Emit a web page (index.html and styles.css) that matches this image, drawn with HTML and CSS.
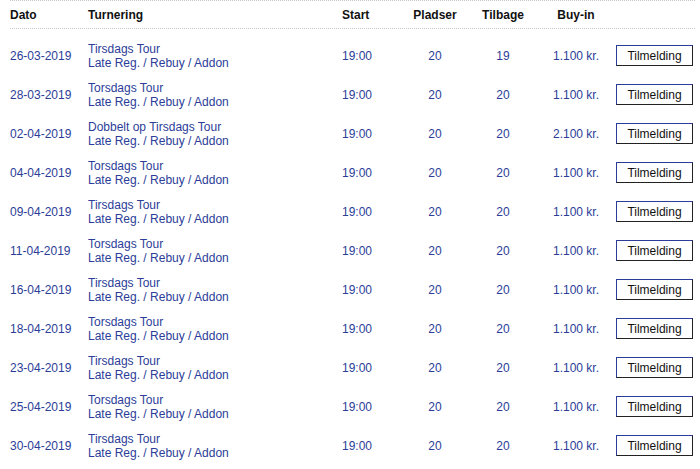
FILE: index.html
```html
<!DOCTYPE html>
<html lang="da">
<head>
<meta charset="utf-8">
<title>Turneringer</title>
<link rel="stylesheet" href="styles.css">
</head>
<body>
<div class="list">
  <div class="row head">
    <div>Dato</div><div>Turnering</div><div>Start</div><div class="c">Pladser</div><div class="c">Tilbage</div><div class="c">Buy-in</div><div></div>
  </div>
  <div class="body">
    <div class="row"><div>26-03-2019</div><div class="t">Tirsdags Tour<br>Late Reg. / Rebuy / Addon</div><div>19:00</div><div class="c">20</div><div class="c">19</div><div class="c">1.100 kr.</div><div><button class="btn">Tilmelding</button></div></div>
    <div class="row"><div>28-03-2019</div><div class="t">Torsdags Tour<br>Late Reg. / Rebuy / Addon</div><div>19:00</div><div class="c">20</div><div class="c">20</div><div class="c">1.100 kr.</div><div><button class="btn">Tilmelding</button></div></div>
    <div class="row"><div>02-04-2019</div><div class="t">Dobbelt op Tirsdags Tour<br>Late Reg. / Rebuy / Addon</div><div>19:00</div><div class="c">20</div><div class="c">20</div><div class="c">2.100 kr.</div><div><button class="btn">Tilmelding</button></div></div>
    <div class="row"><div>04-04-2019</div><div class="t">Torsdags Tour<br>Late Reg. / Rebuy / Addon</div><div>19:00</div><div class="c">20</div><div class="c">20</div><div class="c">1.100 kr.</div><div><button class="btn">Tilmelding</button></div></div>
    <div class="row"><div>09-04-2019</div><div class="t">Tirsdags Tour<br>Late Reg. / Rebuy / Addon</div><div>19:00</div><div class="c">20</div><div class="c">20</div><div class="c">1.100 kr.</div><div><button class="btn">Tilmelding</button></div></div>
    <div class="row"><div>11-04-2019</div><div class="t">Torsdags Tour<br>Late Reg. / Rebuy / Addon</div><div>19:00</div><div class="c">20</div><div class="c">20</div><div class="c">1.100 kr.</div><div><button class="btn">Tilmelding</button></div></div>
    <div class="row"><div>16-04-2019</div><div class="t">Tirsdags Tour<br>Late Reg. / Rebuy / Addon</div><div>19:00</div><div class="c">20</div><div class="c">20</div><div class="c">1.100 kr.</div><div><button class="btn">Tilmelding</button></div></div>
    <div class="row"><div>18-04-2019</div><div class="t">Torsdags Tour<br>Late Reg. / Rebuy / Addon</div><div>19:00</div><div class="c">20</div><div class="c">20</div><div class="c">1.100 kr.</div><div><button class="btn">Tilmelding</button></div></div>
    <div class="row"><div>23-04-2019</div><div class="t">Tirsdags Tour<br>Late Reg. / Rebuy / Addon</div><div>19:00</div><div class="c">20</div><div class="c">20</div><div class="c">1.100 kr.</div><div><button class="btn">Tilmelding</button></div></div>
    <div class="row"><div>25-04-2019</div><div class="t">Torsdags Tour<br>Late Reg. / Rebuy / Addon</div><div>19:00</div><div class="c">20</div><div class="c">20</div><div class="c">1.100 kr.</div><div><button class="btn">Tilmelding</button></div></div>
    <div class="row"><div>30-04-2019</div><div class="t">Tirsdags Tour<br>Late Reg. / Rebuy / Addon</div><div>19:00</div><div class="c">20</div><div class="c">20</div><div class="c">1.100 kr.</div><div><button class="btn">Tilmelding</button></div></div>
  </div>
</div>
</body>
</html>
```
FILE: styles.css
```css
html, body {
  margin: 0;
  padding: 0;
  background: #fff;
}
body {
  font-family: "Liberation Sans", Arial, Helvetica, sans-serif;
  font-size: 12px;
  color: #2b3d98;
}
.list {
  width: 685px;
  margin-left: 10px;
}
.row {
  display: grid;
  grid-template-columns: 78px 254px 62px 62px 74px 72px 83px;
  align-items: center;
  height: 39px;
}
.row .c {
  text-align: center;
}
.row .t {
  line-height: 14px;
}
.head {
  height: 27px;
  border-top: 1px dotted #c8c8c8;
  border-bottom: 1px dotted #c8c8c8;
  font-weight: bold;
  color: #111;
}
.body {
  padding-top: 7px;
}
.btn {
  display: block;
  margin-left: 4px;
  width: 77px;
  height: 21px;
  padding: 0;
  background: #fff;
  border: 1px solid;
  border-color: #2b3d98 #222 #222 #2b3d98;
  font-family: "Liberation Sans", Arial, Helvetica, sans-serif;
  font-size: 12px;
  color: #111;
  text-align: center;
}
```
